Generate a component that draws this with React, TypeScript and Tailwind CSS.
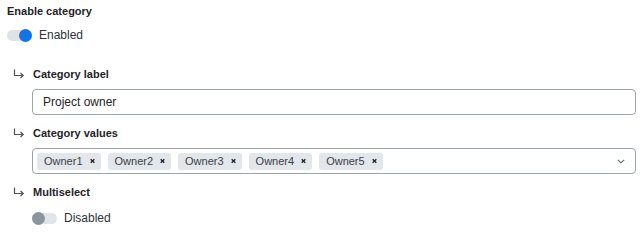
import { useState } from "react";

function Toggle({ on }: { on: boolean }) {
  return (
    <div className="relative w-[26px] h-[14px] flex items-center">
      <div className={`w-[25px] h-[11px] rounded-full ${on ? "bg-[#dfe2e6]" : "bg-[#e2e5e8]"}`} />
      <div
        className={`absolute top-[0.5px] w-[13px] h-[13px] rounded-full ${
          on ? "left-[12px] bg-[#1473e6]" : "left-0 bg-[#8c959e]"
        }`}
      />
    </div>
  );
}

function SubArrow() {
  return (
    <svg width="12" height="10" viewBox="0 0 12 10" fill="none" className="shrink-0">
      <path d="M1.5 0.5V6.5H10" stroke="#4b5158" strokeWidth="1.2" />
      <path d="M7.5 4L10.2 6.5L7.5 9" stroke="#4b5158" strokeWidth="1.2" />
    </svg>
  );
}

function SubLabel({ text }: { text: string }) {
  return (
    <div className="flex items-center h-[16px] pl-[6px]">
      <SubArrow />
      <span className="ml-[8px] text-[11px] font-bold text-[#1f2328]">{text}</span>
    </div>
  );
}

export default function App() {
  const [values, setValues] = useState(["Owner1", "Owner2", "Owner3", "Owner4", "Owner5"]);

  return (
    <div className="w-[643px] h-[240px] bg-white pl-[7px] pr-[7px] pt-[3px] font-['Liberation_Sans',Arial,sans-serif] text-[#1f2328]">
      <div className="h-[16px] leading-[16px] text-[11px] font-bold">Enable category</div>

      <div className="mt-[8px] h-[16px] flex items-center gap-[6px]">
        <Toggle on />
        <span className="text-[12px] text-[#2d3339]">Enabled</span>
      </div>

      <div className="mt-[23px]">
        <SubLabel text="Category label" />
      </div>
      <div className="mt-[7px] ml-[25px] h-[26px] border border-[#9ba3ab] rounded-[4px] flex items-center pl-[10px]">
        <span className="text-[12px] text-[#1f2328]">Project owner</span>
      </div>

      <div className="mt-[10px]">
        <SubLabel text="Category values" />
      </div>
      <div className="mt-[7px] ml-[25px] h-[26px] border border-[#9ba3ab] rounded-[4px] flex items-center pl-[4px] pr-[10px]">
        <div className="flex items-center gap-[7px] flex-1">
          {values.map((v) => (
            <div
              key={v}
              className="h-[17px] rounded-[3px] bg-[#e3e6ea] flex items-center pl-[7px] pr-[6px] gap-[7px]"
            >
              <span className="text-[11px] text-[#3a3f45]">{v}</span>
              <button
                onClick={() => setValues(values.filter((x) => x !== v))}
                className="w-[5px] h-[6px] flex items-center justify-center"
              >
                <svg width="6" height="6" viewBox="0 0 6 6">
                  <path d="M0.8 0.8L5.2 5.2M5.2 0.8L0.8 5.2" stroke="#1f2328" strokeWidth="1.6" />
                </svg>
              </button>
            </div>
          ))}
        </div>
        <svg width="8" height="5" viewBox="0 0 8 5" fill="none">
          <path d="M0.8 0.8L4 3.8L7.2 0.8" stroke="#5a6168" strokeWidth="1.1" />
        </svg>
      </div>

      <div className="mt-[10px]">
        <SubLabel text="Multiselect" />
      </div>
      <div className="mt-[10px] ml-[25px] h-[16px] flex items-center gap-[6px]">
        <Toggle on={false} />
        <span className="text-[12px] text-[#2d3339]">Disabled</span>
      </div>
    </div>
  );
}
